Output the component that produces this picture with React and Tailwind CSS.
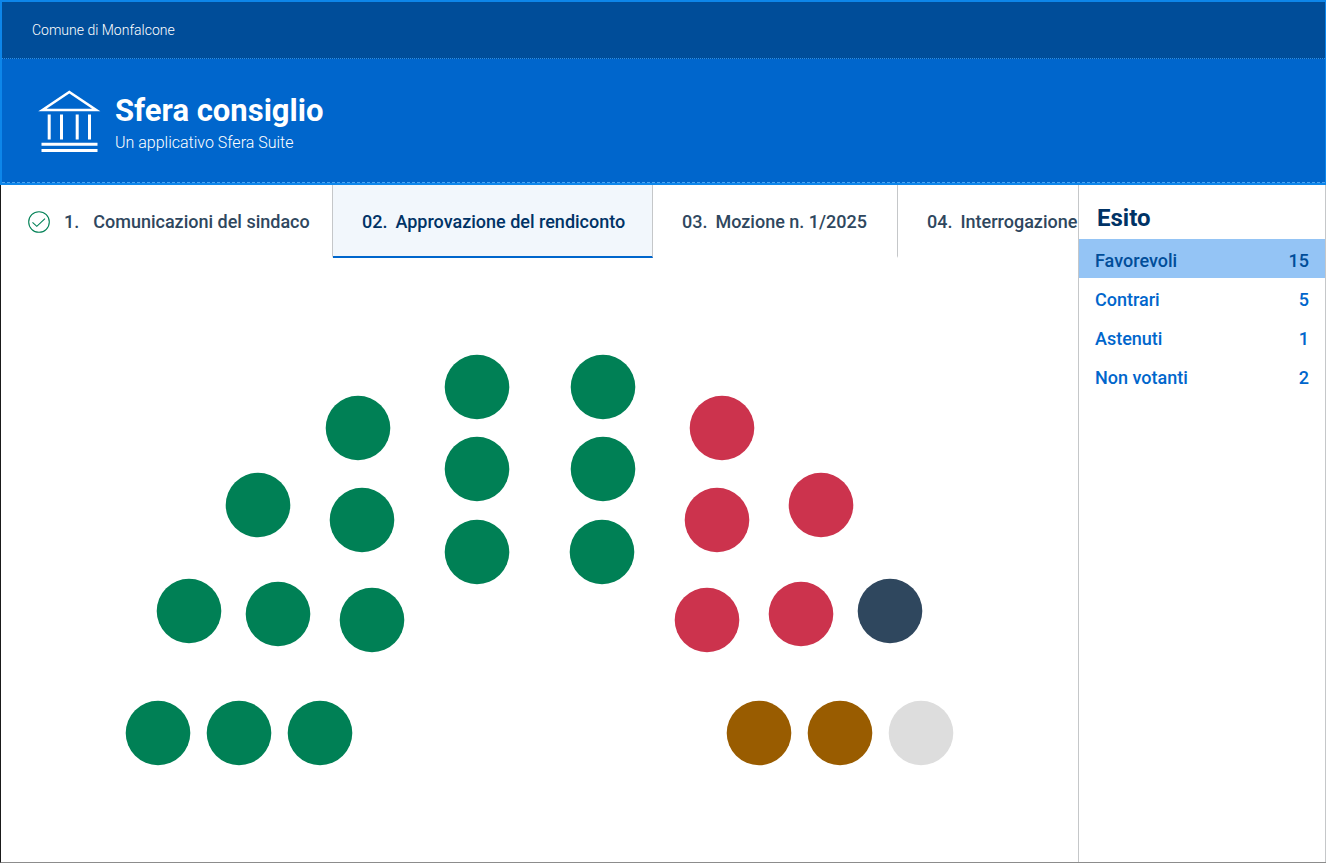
import { useState } from 'react'

const agenda = [
  { id: 1, number: '1.', title: 'Comunicazioni del sindaco', done: true, width: 'w-[332px]' },
  { id: 2, number: '02.', title: 'Approvazione del rendiconto', width: 'w-[320px]' },
  { id: 3, number: '03.', title: 'Mozione n. 1/2025', width: 'w-[245px]' },
  { id: 4, number: '04.', title: 'Interrogazione', width: 'w-[245px]' },
]

const results = [
  { label: 'Favorevoli', count: 15 },
  { label: 'Contrari', count: 5 },
  { label: 'Astenuti', count: 1 },
  { label: 'Non votanti', count: 2 },
]

const voteColors = {
  favorevole: 'fill-[#008055]',
  contrario: 'fill-[#cc334d]',
  astenuto: 'fill-[#2f475e]',
  nonVotante: 'fill-[#995c00]',
  assente: 'fill-[#dddddd]',
}

const seats = [
  { x: 476, y: 129, vote: 'favorevole' },
  { x: 602, y: 129, vote: 'favorevole' },
  { x: 357, y: 170, vote: 'favorevole' },
  { x: 721, y: 170, vote: 'contrario' },
  { x: 476, y: 211, vote: 'favorevole' },
  { x: 602, y: 211, vote: 'favorevole' },
  { x: 257, y: 247, vote: 'favorevole' },
  { x: 361, y: 262, vote: 'favorevole' },
  { x: 716, y: 262, vote: 'contrario' },
  { x: 820, y: 247, vote: 'contrario' },
  { x: 476, y: 294, vote: 'favorevole' },
  { x: 601, y: 294, vote: 'favorevole' },
  { x: 188, y: 353, vote: 'favorevole' },
  { x: 277, y: 356, vote: 'favorevole' },
  { x: 371, y: 362, vote: 'favorevole' },
  { x: 706, y: 362, vote: 'contrario' },
  { x: 800, y: 356, vote: 'contrario' },
  { x: 889, y: 353, vote: 'astenuto' },
  { x: 157, y: 475, vote: 'favorevole' },
  { x: 238, y: 475, vote: 'favorevole' },
  { x: 319, y: 475, vote: 'favorevole' },
  { x: 758, y: 475, vote: 'nonVotante' },
  { x: 839, y: 475, vote: 'nonVotante' },
  { x: 920, y: 475, vote: 'assente' },
]

const InstitutionIcon = () => (
  <svg viewBox="0 0 64 64" className="w-16 h-16" fill="none" stroke="white" aria-hidden="true">
    <path d="M5.5 21 32.3 3l26.8 18Z" strokeWidth="2.6" />
    <path d="M12.2 25.5v25M24.5 25.5v25M40.2 25.5v25M52.5 25.5v25" strokeWidth="3" />
    <path d="M4.5 55.2h56M4.5 61.4h56" strokeWidth="3" />
  </svg>
)

const CheckIcon = () => (
  <svg viewBox="0 0 22 22" className="w-[22px] h-[22px] shrink-0" fill="none" stroke="#008055" aria-label="Concluso">
    <circle cx="11" cy="11" r="10.3" strokeWidth="1.1" />
    <path d="m4.5 11.3 4.3 4 8.2-7.6" strokeWidth="1.1" />
  </svg>
)

const Header = () => (
  <header className="border-2 border-r border-[#0d86ea] bg-[#0066cc] text-white">
    <div className="flex h-[57px] items-center border-b border-dotted border-[#2b8fe8] bg-[#004d99] px-[30px]">
      <a href="#" className="text-sm font-light">Comune di Monfalcone</a>
    </div>
    <div className="flex h-[124px] items-center gap-3.5 border-b border-dashed border-[#4da3f0] px-[35px]">
      <InstitutionIcon />
      <div className="pt-2">
        <h1 className="text-[31px] leading-9 font-bold">Sfera consiglio</h1>
        <p className="text-base leading-7 font-light">Un applicativo Sfera Suite</p>
      </div>
    </div>
  </header>
)

const AgendaTabs = ({ current, onSelect }) => (
  <div role="tablist" aria-label="Ordine del giorno" className="flex overflow-hidden">
    {agenda.map((item) => (
      <button
        key={item.id}
        type="button"
        role="tab"
        aria-selected={item.id === current}
        onClick={() => onSelect(item.id)}
        className={`${item.width} flex h-[73px] shrink-0 items-center border-r border-r-[#c5c7c9] border-b-2 pt-0.5 text-lg font-medium whitespace-nowrap ${
          item.done ? 'gap-3.5 pl-[27px]' : 'gap-2 pl-[29px]'
        } ${
          item.id === current
            ? 'border-b-[#0066cc] bg-[#f2f7fc] text-[#003366]'
            : 'border-b-transparent text-[#2f475e]'
        }`}
      >
        {item.done && <CheckIcon />}
        <span>{item.number}</span>
        <span>{item.title}</span>
      </button>
    ))}
  </div>
)

const SeatMap = () => (
  <svg viewBox="0 0 1077 604" className="w-full" role="img" aria-label="Voti dei consiglieri">
    {seats.map((seat) => (
      <circle key={`${seat.x}-${seat.y}`} cx={seat.x} cy={seat.y} r="32.3" className={voteColors[seat.vote]} />
    ))}
  </svg>
)

const Results = ({ selected, onSelect }) => (
  <aside className="w-[248px] shrink-0 border-x border-[#c5c7c9]">
    <h2 className="px-[18px] pt-4 pb-1 text-2xl leading-[34px] font-bold text-[#003366]">Esito</h2>
    <ul>
      {results.map((row) => (
        <li key={row.label}>
          <button
            type="button"
            onClick={() => onSelect(row.label)}
            className={`flex h-[39px] w-full items-center justify-between px-4 pt-1 text-lg font-medium ${
              row.label === selected ? 'bg-[#94c4f5] text-[#004d99]' : 'text-[#0066cc]'
            }`}
          >
            <span>{row.label}</span>
            <span>{row.count}</span>
          </button>
        </li>
      ))}
    </ul>
  </aside>
)

const App = () => {
  const [current, setCurrent] = useState(2)
  const [selected, setSelected] = useState('Favorevoli')

  return (
    <div className="flex min-h-screen flex-col bg-white font-[Roboto,sans-serif]">
      <Header />
      <div className="flex grow border-b border-l border-b-[#8c8c8c] border-l-[#1a1a1a]">
        <main className="min-w-0 grow">
          <AgendaTabs current={current} onSelect={setCurrent} />
          <SeatMap />
        </main>
        <Results selected={selected} onSelect={setSelected} />
      </div>
    </div>
  )
}

export default App
